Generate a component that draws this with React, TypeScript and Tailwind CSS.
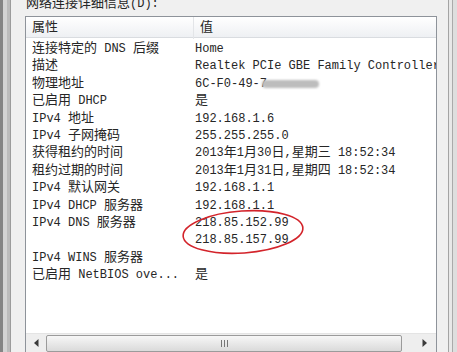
import React from 'react';

const CJK = /[\u3000-\u9fff\uff00-\uffef]/;

// latin glyphs stay at 12px mono, CJK runs get a bit bigger like SimSun does
function Mixed({ text }: { text: string }) {
  const runs: { cjk: boolean; s: string }[] = [];
  for (const ch of text) {
    const cjk = CJK.test(ch);
    const last = runs[runs.length - 1];
    if (last && last.cjk === cjk) last.s += ch;
    else runs.push({ cjk, s: ch });
  }
  return (
    <>
      {runs.map((r, i) =>
        r.cjk ? (
          <span key={i} className="text-[13px]">{r.s}</span>
        ) : (
          <span key={i}>{r.s}</span>
        )
      )}
    </>
  );
}

const rows: [string, React.ReactNode][] = [
  ['连接特定的 DNS 后缀', 'Home'],
  ['描述', 'Realtek PCIe GBE Family Controller'],
  [
    '物理地址',
    <span className="inline-flex items-center">
      <span>6C-F0-49-7</span>
      <span className="-ml-[5px] inline-block w-[57px] h-[8px] rounded-full bg-[#bdbdbd] blur-[1px]" />
    </span>,
  ],
  ['已启用 DHCP', '是'],
  ['IPv4 地址', '192.168.1.6'],
  ['IPv4 子网掩码', '255.255.255.0'],
  ['获得租约的时间', '2013年1月30日,星期三 18:52:34'],
  ['租约过期的时间', '2013年1月31日,星期四 18:52:34'],
  ['IPv4 默认网关', '192.168.1.1'],
  ['IPv4 DHCP 服务器', '192.168.1.1'],
  ['IPv4 DNS 服务器', '218.85.152.99'],
  ['', '218.85.157.99'],
  ['IPv4 WINS 服务器', ''],
  ['已启用 NetBIOS ove...', '是'],
];

export default function App() {
  return (
    <div
      className="relative w-[457px] h-[352px] overflow-hidden bg-[#f0f0f0] flex text-[12px] text-[#262626]"
      style={{ fontFamily: '"Liberation Mono", "Noto Sans CJK SC", monospace' }}
    >
      {/* left window edge */}
      <div className="w-[3px] bg-[#858585]" />
      <div className="w-[4px] bg-[#d4d4d4]" />
      <div className="w-[3px] bg-[#bcbcbc]" />
      <div className="w-[1px] bg-[#9c9c9c]" />

      <div className="w-[437px] flex flex-col">
        <div className="pl-[15px] h-[16px] -mt-[4px] leading-[16px] whitespace-nowrap">
          <Mixed text="网络连接详细信息(D):" />
        </div>

        <div className="ml-[14px] w-[412px] h-[337px] mt-[4px] border border-b-0 border-[#8e939a] bg-white flex flex-col">
          {/* header */}
          <div className="h-[21px] border-b border-[#d9dce0] bg-linear-to-b from-white to-[#eef0f3] grid grid-cols-[162px_1fr] pl-[6px] items-center shrink-0">
            <div className="leading-[22px] border-r border-[#e3e5e8] h-full"><Mixed text="属性" /></div>
            <div className="pl-[6px] leading-[22px]"><Mixed text="值" /></div>
          </div>

          {/* rows */}
          <div className="flex-1 pt-[2px] overflow-hidden">
            {rows.map(([k, v], i) => (
              <div key={i} className="h-[17.4px] leading-[18.4px] grid grid-cols-[163px_1fr] pl-[6px] whitespace-nowrap">
                <div className="overflow-hidden">{k && <Mixed text={k} />}</div>
                <div className="overflow-hidden">
                  {typeof v === 'string' ? <Mixed text={v} /> : v}
                </div>
              </div>
            ))}
          </div>

          {/* horizontal scrollbar */}
          <div className="h-[19px] bg-[#eeeeee] flex items-center shrink-0 border-t border-[#e4e4e4]">
            <div className="w-[20px] flex justify-center">
              <svg width="5" height="8" viewBox="0 0 5 8"><path d="M4.5 0 L0 4 L4.5 8 Z" fill="#3a3a3a" /></svg>
            </div>
            <div className="w-[356px] h-[17px] rounded-[2px] border border-[#9b9b9b] bg-linear-to-b from-[#f7f7f7] to-[#dadada] flex items-center justify-center gap-[2px]">
              <div className="w-[1px] h-[7px] bg-[#777]" />
              <div className="w-[1px] h-[7px] bg-[#777]" />
              <div className="w-[1px] h-[7px] bg-[#777]" />
            </div>
            <div className="flex-1 flex justify-center pl-[10px]">
              <svg width="5" height="8" viewBox="0 0 5 8"><path d="M0.5 0 L5 4 L0.5 8 Z" fill="#3a3a3a" /></svg>
            </div>
          </div>
        </div>
      </div>

      {/* right window edge */}
      <div className="w-[1px] bg-[#a4a4a4]" />
      <div className="w-[3px] bg-[#e8e8e8]" />
      <div className="w-[1px] bg-[#aaaaaa]" />
      <div className="flex-1 bg-[#dedede]" />

      {/* red hand-drawn mark */}
      <svg className="absolute left-0 top-0 pointer-events-none" width="457" height="352">
        <ellipse cx="243" cy="232" rx="60" ry="21" transform="rotate(-4 243 232)" fill="none" stroke="#d3242b" strokeWidth="1.6" />
      </svg>
    </div>
  );
}
